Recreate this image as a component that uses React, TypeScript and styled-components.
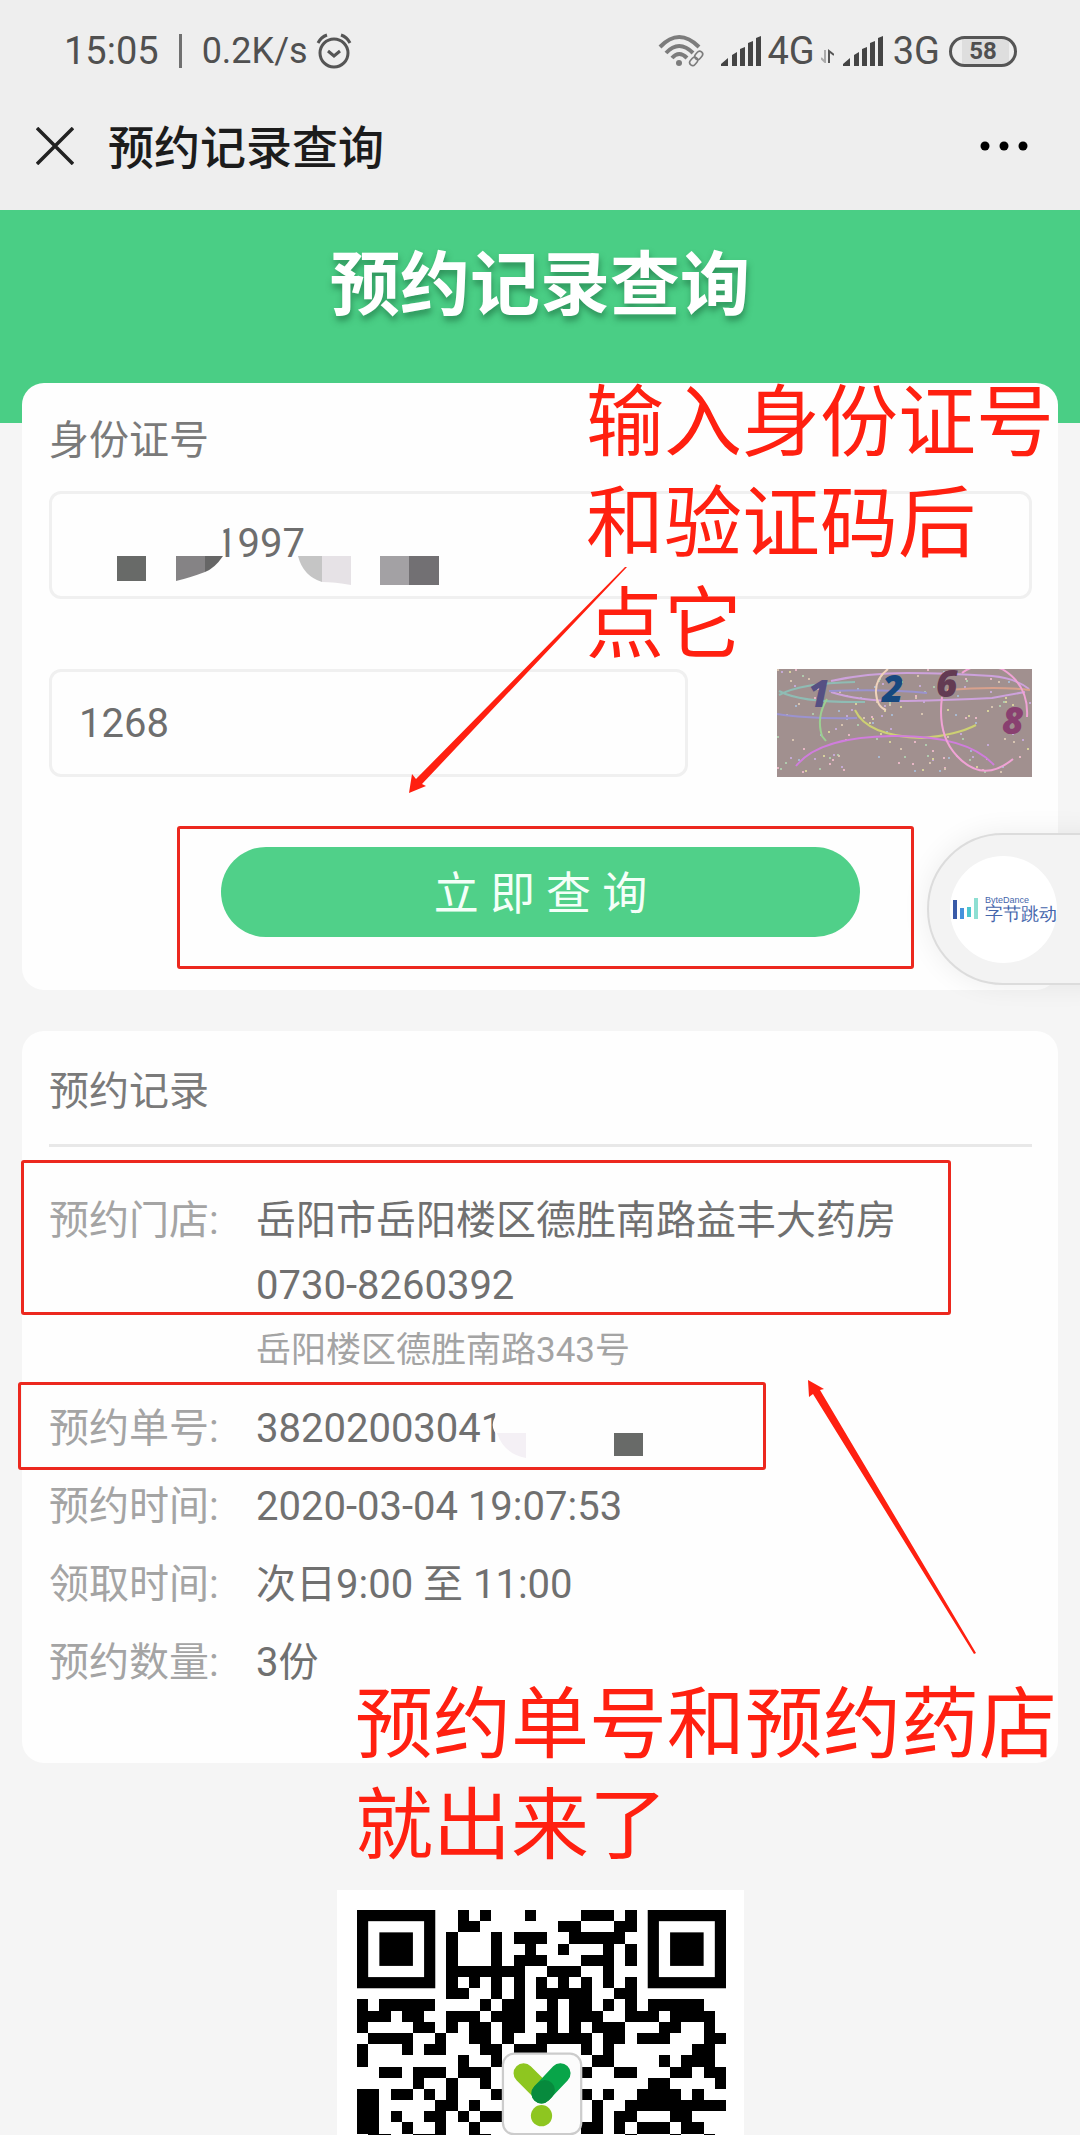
import React from "react";
import styled, { createGlobalStyle } from "styled-components";

const RED = "#ff2010";

const GlobalStyle = createGlobalStyle`
  *, *::before, *::after { box-sizing: border-box; }
  body {
    margin: 0;
    background: #f5f5f5;
    font-family: Roboto, "Noto Sans CJK SC", sans-serif;
  }
  h1, h2, p, dl, dd { margin: 0; font-weight: 400; }
`;

const Page = styled.div`
  position: relative;
  overflow: hidden;
`;

const TopBar = styled.header`
  background: #eeeeee;
`;

const StatusBar = styled.div`
  display: flex;
  align-items: center;
  justify-content: space-between;
  height: 82px;
  padding: 20px 63px 0 64px;
  font-size: 38px;
  line-height: 40px;
  color: #505050;
`;

const StatusGroup = styled.div<{ $gap: number }>`
  display: flex;
  align-items: center;
  gap: ${(p) => p.$gap}px;
`;

const StatusDivider = styled.span`
  width: 3px;
  height: 34px;
  margin: 0 12px;
  background: #707070;
`;

const Speed = styled.span`
  font-size: 36px;
`;

const Battery = styled.span`
  display: flex;
  align-items: center;
  justify-content: center;
  width: 68px;
  height: 31px;
  border: 3px solid #555555;
  border-radius: 16px;
  background: linear-gradient(90deg, #eeeeee 16%, #dedede 16%, #dedede 92%, #eeeeee 92%);
  font-size: 24px;
  font-weight: 700;
  line-height: 24px;
`;

const NavBar = styled.div`
  display: flex;
  align-items: center;
  height: 128px;
  padding: 0 48px 0 36px;
`;

const NavTitle = styled.p`
  flex: 1;
  padding: 4px 0 0 34px;
  font-size: 46px;
  font-weight: 500;
  line-height: 64px;
  color: #1c1c1c;
`;

const IconButton = styled.button`
  display: flex;
  padding: 0;
  border: 0;
  background: none;
  cursor: pointer;
`;

const Hero = styled.div`
  height: 213px;
  padding-top: 26px;
  background: #4ace85;
  text-align: center;
`;

const HeroTitle = styled.h1`
  && { font-weight: 700; }
  font-size: 70px;
  line-height: 100px;
  color: #ffffff;
  text-shadow: 1px 5px 6px rgba(20, 90, 50, 0.5);
`;

const Main = styled.main`
  display: flex;
  flex-direction: column;
  gap: 41px;
  margin-top: -40px;
  padding: 0 22px;
`;

const Card = styled.section`
  position: relative;
  padding: 24px 26px 68px 27px;
  border-radius: 22px;
  background: #fefefe;
`;

const FormCard = styled(Card)`
  padding-bottom: 53px;
`;

const FieldLabel = styled.label`
  display: block;
  padding-top: 2px;
  margin-bottom: 18px;
  font-size: 40px;
  line-height: 64px;
  color: #7a7a7a;
`;

const Field = styled.div`
  position: relative;
  flex: 1;
`;

const TextBox = styled.input<{ $indent: number; $raise: number }>`
  display: block;
  width: 100%;
  height: 108px;
  padding: 0 28px ${(p) => p.$raise}px ${(p) => p.$indent}px;
  border: 3px solid #f0f0f0;
  border-radius: 12px;
  outline: none;
  background: transparent;
  font-family: inherit;
  font-size: 40px;
  color: #6e6e6e;
`;

const CodeRow = styled.div`
  display: flex;
  align-items: center;
  gap: 89px;
  margin: 70px 0;
`;

const CaptchaButton = styled(IconButton)`
  width: 255px;
`;

const SubmitArea = styled.div`
  position: relative;
  width: 65%;
  margin: 0 auto;
`;

const SubmitButton = styled.button`
  display: block;
  width: 100%;
  height: 90px;
  padding: 5px 0 0;
  border: 0;
  border-radius: 45px;
  background: #50d089;
  font-family: inherit;
  font-size: 45px;
  line-height: 64px;
  color: #f4fff8;
  cursor: pointer;
`;

const MarkBox = styled.span<{ $inset: string }>`
  position: absolute;
  inset: ${(p) => p.$inset};
  border: 3px solid #ec281e;
  border-radius: 3px;
  pointer-events: none;
`;

const CardTitle = styled.h2`
  padding: 5px 0 20px;
  border-bottom: 3px solid #e8e8e8;
  font-size: 40px;
  line-height: 64px;
  color: #7a7a7a;
`;

const Records = styled.dl`
  display: flex;
  flex-direction: column;
  gap: 13px;
  padding-top: 41px;
`;

const Record = styled.div`
  position: relative;
  display: grid;
  grid-template-columns: 207px 1fr;
  font-size: 40px;
  line-height: 65px;
`;

const RecordName = styled.dt`
  color: #a4a4a4;
`;

const RecordValue = styled.dd`
  position: relative;
  color: #707070;
`;

const Address = styled.p`
  font-size: 35px;
  color: #a4a4a4;
`;

const Overlay = styled.svg<{ $left: number; $top: number }>`
  position: absolute;
  left: ${(p) => p.$left}px;
  top: ${(p) => p.$top}px;
  overflow: visible;
  pointer-events: none;
`;

const Note = styled.p<{ $left: number; $top: number }>`
  position: absolute;
  left: ${(p) => p.$left}px;
  top: ${(p) => p.$top}px;
  z-index: 2;
  font-family: "Noto Sans CJK SC", sans-serif;
  font-size: 78px;
  line-height: 101px;
  white-space: nowrap;
  color: ${RED};
`;

const FloatTab = styled.button`
  position: absolute;
  top: 833px;
  right: -24px;
  display: flex;
  align-items: center;
  width: 177px;
  height: 152px;
  padding: 0 0 0 21px;
  border: 2px solid #dcdcdc;
  border-radius: 76px 0 0 76px;
  background: #f3f3f3;
  box-shadow: 0 0 28px rgba(0, 0, 0, 0.07);
`;

const FloatLogo = styled.span`
  display: flex;
  align-items: center;
  gap: 6px;
  width: 107px;
  height: 107px;
  padding-left: 3px;
  border-radius: 50%;
  background: #ffffff;
`;

const LogoText = styled.span`
  display: flex;
  flex-direction: column;
  font-size: 18px;
  font-weight: 500;
  line-height: 18px;
  white-space: nowrap;
  text-align: left;
  color: #4566ac;
`;

const LogoLatin = styled.span`
  font-size: 9px;
  line-height: 9px;
`;

const QrPanel = styled.footer`
  width: 407px;
  height: 245px;
  margin: 127px auto 0;
  padding: 20px;
  overflow: hidden;
  background: #ffffff;
`;

function AlarmIcon() {
  return (
    <svg width="36" height="36" viewBox="0 0 36 36" fill="none" stroke="#555" strokeWidth="3">
      <circle cx="18" cy="20" r="14" />
      <path d="M12 18l6 5 6-5M2 10Q5 4 11 2M34 10Q31 4 25 2" />
    </svg>
  );
}

function WifiIcon() {
  return (
    <svg width="54" height="32" viewBox="0 0 54 32" fill="none" stroke="#7c7c7c" strokeWidth="4">
      <path d="M2 12Q21-8 41 12M8 18Q21 4 35 18M14 23Q21 15 29 23" />
      <circle cx="21" cy="28" r="3" fill="#7c7c7c" stroke="none" />
      <g strokeWidth="1.6">
        <rect x="38" y="16" width="6" height="9" rx="3" transform="rotate(40 41 20)" />
        <rect x="33" y="22" width="6" height="9" rx="3" transform="rotate(40 36 26)" />
      </g>
    </svg>
  );
}

function SignalIcon() {
  return (
    <svg width="41" height="30" viewBox="0 0 41 30" fill="#444">
      <path d="M0 30v-2l7-6v8zM11 30V19l5-3v14zM19 30V13l5-2v19zM27 30V7l5-2v25zM35 30V2l5-2v30z" />
    </svg>
  );
}

function DataIcon() {
  return (
    <svg width="13" height="24" viewBox="0 -11 13 24" fill="none" strokeWidth="2">
      <path d="M4 0v12L0 8" stroke="#aaa" />
      <path d="M8 13V1l5 4" stroke="#555" />
    </svg>
  );
}

function CaptchaPicture() {
  const tints = ["#d7c3b0", "#c4a9d4", "#b0c9ad", "#d6d09c", "#e6b6c4", "#a8b8cf"];
  const specks = Array.from({ length: 150 }, (_, i) => ({
    x: (i * 73 + ((i * i) % 41)) % 253,
    y: (i * 37 + ((i * i * 3) % 53)) % 106,
    c: tints[i % tints.length],
  }));
  return (
    <svg width="255" height="108" viewBox="0 0 255 108" fontFamily="'Open Sans', 'DejaVu Sans', sans-serif" fontSize="37" fontWeight="800" fontStyle="italic">
      <rect width="255" height="108" fill="#a1908f" />
      {specks.map((s, i) => (
        <rect key={i} x={s.x} y={s.y} width="2" height="2" fill={s.c} />
      ))}
      <g fill="none" strokeWidth="2">
        <path d="M54 12Q90 4 130 4T215 7Q238 9 252 20" stroke="#cda2dc" />
        <path d="M54 23Q85 33 130 32T215 29L248 23" stroke="#cda2dc" />
        <path d="M2 26Q24 14 78 13M2 22Q24 34 88 33" stroke="#8fbcb4" />
        <path d="M0 45Q30 50 80 49M52 22Q110 20 150 24" stroke="#9b93cf" />
        <path d="M170 21Q220 17 253 21" stroke="#d8a18d" />
        <path d="M111 0Q98 10 99 24T109 41" stroke="#f0d3bc" />
        <path d="M50 30Q39 48 45 67L49 72" stroke="#9ccf92" />
        <path d="M78 41Q90 67 145 69Q180 66 199 56" stroke="#cdd073" />
        <path d="M19 97Q42 68 115 67Q190 66 217 96" stroke="#d07ddd" />
        <path d="M185 4Q200-8 225 0Q252 16 250 48M165 28Q160 66 180 87Q206 115 236 90" stroke="#f0a3d5" />
      </g>
      <text x="31" y="38" fill="#565083">1</text>
      <text x="105" y="33" fill="#17497f">2</text>
      <text x="159" y="28" fill="#633b53">6</text>
      <text x="225" y="65" fill="#894070">8</text>
    </svg>
  );
}

// One entry per QR row, each listing runs of dark modules as [first, last].
const QR_ROWS: number[][][] = [
  [[9, 9], [11, 11], [15, 15], [20, 22], [24, 24]],
  [[9, 10], [18, 19], [23, 24]],
  [[8, 8], [12, 12], [14, 16], [19, 23]],
  [[8, 8], [12, 12], [15, 15], [18, 18], [22, 22], [24, 24]],
  [[8, 8], [12, 12], [14, 16], [20, 22], [24, 24]],
  [[8, 14], [17, 19], [22, 22]],
  [[8, 8], [10, 10], [12, 12], [14, 14], [16, 16], [18, 18], [20, 20], [22, 22], [24, 24]],
  [[8, 9], [12, 12], [14, 14], [16, 20], [23, 24]],
  [[0, 0], [2, 6], [11, 11], [13, 14], [17, 17], [19, 20], [22, 22], [24, 24], [26, 30]],
  [[0, 2], [4, 5], [8, 10], [12, 14], [16, 17], [19, 21], [24, 26], [28, 31]],
  [[0, 0], [5, 6], [8, 8], [10, 11], [13, 14], [17, 17], [19, 19], [21, 23], [27, 28], [31, 31]],
  [[1, 4], [7, 7], [10, 11], [13, 13], [16, 20], [22, 23], [25, 27], [31, 32]],
  [[0, 0], [4, 4], [6, 7], [11, 12], [14, 16], [20, 20], [22, 22], [30, 31]],
  [[0, 0], [9, 9], [12, 12], [21, 22], [27, 27], [29, 31]],
  [[2, 3], [5, 7], [9, 11], [20, 20], [23, 24], [28, 29], [31, 32]],
  [[5, 5], [8, 8], [11, 11], [26, 27], [32, 32]],
  [[0, 1], [3, 4], [6, 6], [8, 8], [12, 12], [20, 20], [22, 22], [25, 28], [30, 30]],
  [[0, 1], [7, 8], [10, 10], [21, 21], [24, 32]],
  [[0, 1], [3, 3], [6, 7], [9, 9], [11, 12], [21, 21], [23, 24], [28, 29]],
  [[0, 1], [4, 4], [7, 7], [10, 10], [20, 21], [23, 23], [25, 27], [29, 30]],
  [[1, 2], [5, 7], [10, 11], [24, 24], [28, 28], [31, 31]],
];

function QrCode() {
  const modules = QR_ROWS.map((runs, y) =>
    runs.map(([a, b]) => `M${a} ${y}H${b + 1}V${y + 1}H${a}z`).join("")
  ).join("");
  return (
    <svg width="369" height="369" viewBox="0 0 33 33" role="img" aria-label="二维码">
      <path d={modules} shapeRendering="crispEdges" />
      {[0, 26].map((x) => (
        <g key={x}>
          <rect x={x + 0.5} y="0.5" width="6" height="6" fill="none" stroke="#000" />
          <rect x={x + 2} y="2" width="3" height="3" />
        </g>
      ))}
      <rect x="13.05" y="12.85" width="7" height="7.2" rx="1" fill="#fcfcfc" stroke="#ccc" strokeWidth="0.2" />
      <g fill="none" strokeWidth="1.8" strokeLinecap="round">
        <path d="M14.9 14.6l1.6 1.6" stroke="#8ec620" />
        <path d="M18.2 14.6l-1.7 1.8" stroke="#08a549" />
        <path d="M16.5 16.4l.3-.3" stroke="#078a3d" />
      </g>
      <circle cx="16.5" cy="18.4" r="0.95" fill="#8ec620" />
    </svg>
  );
}

export default function App() {
  return (
    <>
      <GlobalStyle />
      <Page>
        <TopBar>
          <StatusBar>
            <StatusGroup $gap={8}>
              <span>15:05</span>
              <StatusDivider />
              <Speed>0.2K/s</Speed>
              <AlarmIcon />
            </StatusGroup>
            <StatusGroup $gap={9}>
              <WifiIcon />
              <StatusGroup $gap={6}>
                <SignalIcon />
                <span>4G</span>
                <DataIcon />
              </StatusGroup>
              <SignalIcon />
              <span>3G</span>
              <Battery>58</Battery>
            </StatusGroup>
          </StatusBar>
          <NavBar>
            <IconButton aria-label="关闭">
              <svg width="38" height="38" viewBox="0 0 38 38" stroke="#222" strokeWidth="3.5">
                <path d="M1 1l36 36M37 1L1 37" />
              </svg>
            </IconButton>
            <NavTitle>预约记录查询</NavTitle>
            <IconButton aria-label="更多">
              <svg width="56" height="12" viewBox="0 0 56 12">
                <circle cx="9" cy="6" r="4.5" />
                <circle cx="28" cy="6" r="4.5" />
                <circle cx="47" cy="6" r="4.5" />
              </svg>
            </IconButton>
          </NavBar>
        </TopBar>

        <Hero>
          <HeroTitle>预约记录查询</HeroTitle>
        </Hero>

        <Main>
          <FormCard>
            <FieldLabel htmlFor="id-number">身份证号</FieldLabel>
            <Field>
              <TextBox id="id-number" defaultValue="1997" $indent={163} $raise={4} />
              <Overlay $left={68} $top={65} width="322" height="30" viewBox="0 0 322 30">
                <path d="M96-32h10l2 30H96z" fill="#fefefe" />
                <path d="M0 0h29v25H0z" fill="#686a68" />
                <path d="M59 0h29v16Q72 22 59 25z" fill="#858385" />
                <path d="M88 0h18Q98 12 88 16z" fill="#666" />
                <path d="M181 0h24v26Q186 20 181 0z" fill="#c5c5c5" />
                <path d="M205 0h29v29Q218 26 205 26z" fill="#e6e2e6" />
                <path d="M263 0h29v29h-29z" fill="#a3a1a4" />
                <path d="M292 0h30v29h-30z" fill="#727073" />
              </Overlay>
            </Field>
            <CodeRow>
              <Field>
                <TextBox aria-label="验证码" defaultValue="1268" $indent={27} $raise={0} />
              </Field>
              <CaptchaButton type="button" aria-label="换一张验证码">
                <CaptchaPicture />
              </CaptchaButton>
            </CodeRow>
            <SubmitArea>
              <SubmitButton type="button">立 即 查 询</SubmitButton>
              <MarkBox $inset="-21px -54px -32px -44px" />
            </SubmitArea>
            <Overlay $left={387} $top={184} width="218" height="226" viewBox="0 0 218 226">
              <path d="M218 0L216 0L7 212L3 207L0 226L17 219L13 217Z" fill={RED} />
            </Overlay>
            <Note $left={564} $top={-17}>
              输入身份证号
              <br />
              和验证码后
              <br />
              点它
            </Note>
          </FormCard>

          <Card>
            <CardTitle>预约记录</CardTitle>
            <Records>
              <Record>
                <RecordName>预约门店:</RecordName>
                <RecordValue>
                  <p>岳阳市岳阳楼区德胜南路益丰大药房</p>
                  <p>0730-8260392</p>
                  <Address>岳阳楼区德胜南路343号</Address>
                </RecordValue>
                <MarkBox $inset="-28px 81px 68px -28px" />
              </Record>
              <Record>
                <RecordName>预约单号:</RecordName>
                <RecordValue>
                  38202003041
                  <Overlay $left={238} $top={6} width="150" height="60" viewBox="0 0 150 60">
                    <path d="M4 0h28v50H8L4 40L4 34Q-6 24 3 12z" fill="#fefefe" />
                    <path d="M3 31h29v25Q10 52 3 31z" fill="#f4f0f5" />
                    <path d="M120 31h29v23h-29z" fill="#686a68" />
                  </Overlay>
                </RecordValue>
                <MarkBox $inset="-14px 266px -9px -31px" />
              </Record>
              <Record>
                <RecordName>预约时间:</RecordName>
                <RecordValue>2020-03-04 19:07:53</RecordValue>
              </Record>
              <Record>
                <RecordName>领取时间:</RecordName>
                <RecordValue>次日9:00 至 11:00</RecordValue>
              </Record>
              <Record>
                <RecordName>预约数量:</RecordName>
                <RecordValue>3份</RecordValue>
              </Record>
            </Records>
            <Overlay $left={786} $top={349} width="168" height="275" viewBox="0 0 168 275">
              <path d="M0 0L16 9L12 10L168 273L166 274L5 14L1 17Z" fill={RED} />
            </Overlay>
            <Note $left={333} $top={637}>
              预约单号和预约药店
              <br />
              就出来了
            </Note>
          </Card>
        </Main>

        <QrPanel>
          <QrCode />
        </QrPanel>

        <FloatTab type="button">
          <FloatLogo>
            <svg width="26" height="22" viewBox="0 0 26 22">
              <path d="M0 2h4v19H0z" fill="#3a5ba8" />
              <path d="M7 10h4v11H7z" fill="#4591dc" />
              <path d="M14 9h4v10h-4z" fill="#4cc6cf" />
              <path d="M21 0h4v21h-4z" fill="#8edfd2" />
            </svg>
            <LogoText>
              <LogoLatin>ByteDance</LogoLatin>
              字节跳动
            </LogoText>
          </FloatLogo>
        </FloatTab>
      </Page>
    </>
  );
}
